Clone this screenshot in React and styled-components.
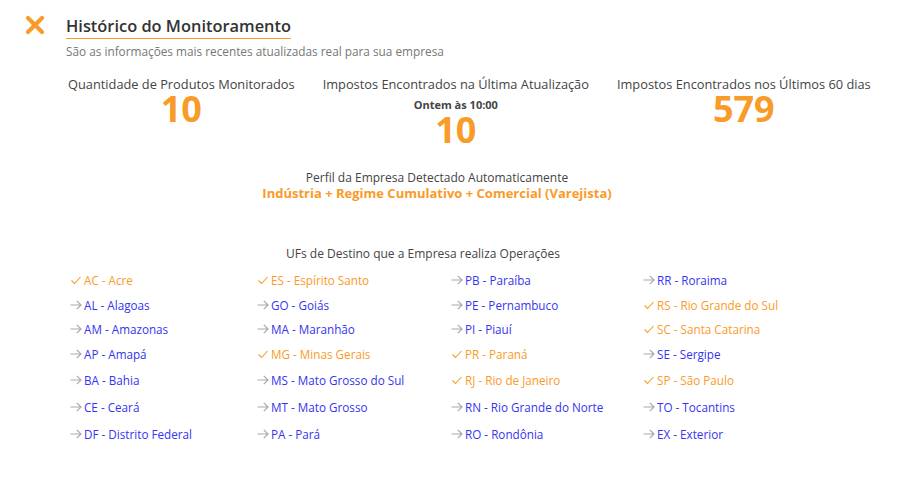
import React from "react";
import styled, { createGlobalStyle } from "styled-components";

const Global = createGlobalStyle`
  html, body { margin: 0; padding: 0; background: #fff; }
  body { font-family: "Open Sans", "Liberation Sans", sans-serif; color: #444; }
`;

const ORANGE = "#f99b28";
const BLUE = "#3535ee";

const Page = styled.div`
  width: 904px;
  height: 482px;
  box-sizing: border-box;
  padding: 15px 0 0 24px;
`;

const Header = styled.div`
  display: flex;
  align-items: flex-start;
  gap: 20px;
`;

const CloseButton = styled.button`
  border: none;
  background: none;
  padding: 0;
  margin-top: -1px;
  width: 22px;
  height: 22px;
  cursor: pointer;
  display: flex;
`;

const TitleBlock = styled.div`
  display: flex;
  flex-direction: column;
  align-items: flex-start;
`;

const Title = styled.h1`
  margin: 0;
  font-size: 16.4px;
  font-weight: 600;
  color: #333;
  line-height: 20px;
  padding-top: 1px;
  padding-bottom: 2px;
  border-bottom: 1px solid ${ORANGE};
`;

const Subtitle = styled.p`
  margin: 4px 0 0;
  font-size: 11.8px;
  color: #777;
  line-height: 16px;
`;

const Stats = styled.div`
  display: flex;
  gap: 28px;
  margin: 16px 0 0 44px;
`;

const Stat = styled.div`
  display: flex;
  flex-direction: column;
  align-items: center;
`;

const StatLabel = styled.div`
  font-size: 12.8px;
  color: #444;
  line-height: 18px;
`;

const StatSub = styled.div`
  font-size: 11px;
  font-weight: 700;
  color: #444;
  line-height: 14px;
  margin-top: 5px;
`;

const StatValue = styled.div`
  font-size: 36px;
  font-weight: 700;
  color: ${ORANGE};
  line-height: 30px;
  margin-top: ${(p) => (p.$afterSub ? "3px" : "1px")};
`;

const Profile = styled.div`
  display: flex;
  flex-direction: column;
  align-items: center;
  width: 826px;
  margin-top: 25px;
`;

const ProfileLabel = styled.div`
  font-size: 12px;
  color: #444;
  line-height: 16px;
`;

const ProfileValue = styled.div`
  font-size: 13px;
  font-weight: 700;
  color: ${ORANGE};
  line-height: 16px;
  margin-top: -1px;
`;

const UfTitle = styled.div`
  width: 798px;
  text-align: center;
  font-size: 12px;
  color: #444;
  line-height: 16px;
  margin-top: 45px;
`;

const UfGrid = styled.div`
  display: grid;
  grid-template-columns: 187px 194px 192px 193px;
  grid-auto-flow: column;
  grid-template-rows: 25px 24px 25px 26px 27px 27px 16px;
  align-items: start;
  margin: 10px 0 0 46px;
`;

const UfItem = styled.div`
  display: flex;
  align-items: center;
  gap: 2px;
  font-size: 11.7px;
  line-height: 16px;
  color: ${(p) => (p.$active ? ORANGE : BLUE)};
`;

const IconBox = styled.span`
  display: inline-flex;
  width: 12px;
  height: 12px;
`;

const XIcon = () => (
  <svg width="22" height="22" viewBox="0 0 22 22">
    <path d="M4 4 L18 18 M18 4 L4 18" stroke={ORANGE} strokeWidth="4.2" strokeLinecap="round" />
  </svg>
);

const Check = () => (
  <svg width="12" height="12" viewBox="0 0 12 12">
    <path d="M1.5 6.5 L4.5 9.5 L10.5 3" stroke={ORANGE} strokeWidth="1.1" fill="none" />
  </svg>
);

const Arrow = () => (
  <svg width="12" height="12" viewBox="0 0 12 12">
    <path d="M0.5 6 H11 M6.8 1.8 L11 6 L6.8 10.2" stroke="#aaa" strokeWidth="1.2" fill="none" />
  </svg>
);

const ufs = [
  ["AC - Acre", true], ["AL - Alagoas"], ["AM - Amazonas"], ["AP - Amapá"], ["BA - Bahia"], ["CE - Ceará"], ["DF - Distrito Federal"],
  ["ES - Espírito Santo", true], ["GO - Goiás"], ["MA - Maranhão"], ["MG - Minas Gerais", true], ["MS - Mato Grosso do Sul"], ["MT - Mato Grosso"], ["PA - Pará"],
  ["PB - Paraíba"], ["PE - Pernambuco"], ["PI - Piauí"], ["PR - Paraná", true], ["RJ - Rio de Janeiro", true], ["RN - Rio Grande do Norte"], ["RO - Rondônia"],
  ["RR - Roraima"], ["RS - Rio Grande do Sul", true], ["SC - Santa Catarina", true], ["SE - Sergipe"], ["SP - São Paulo", true], ["TO - Tocantins"], ["EX - Exterior"],
];

export default function App() {
  return (
    <Page>
      <Global />
      <Header>
        <CloseButton aria-label="Fechar"><XIcon /></CloseButton>
        <TitleBlock>
          <Title>Histórico do Monitoramento</Title>
          <Subtitle>São as informações mais recentes atualizadas real para sua empresa</Subtitle>
        </TitleBlock>
      </Header>
      <Stats>
        <Stat>
          <StatLabel>Quantidade de Produtos Monitorados</StatLabel>
          <StatValue>10</StatValue>
        </Stat>
        <Stat>
          <StatLabel>Impostos Encontrados na Última Atualização</StatLabel>
          <StatSub>Ontem às 10:00</StatSub>
          <StatValue $afterSub>10</StatValue>
        </Stat>
        <Stat>
          <StatLabel>Impostos Encontrados nos Últimos 60 dias</StatLabel>
          <StatValue>579</StatValue>
        </Stat>
      </Stats>
      <Profile>
        <ProfileLabel>Perfil da Empresa Detectado Automaticamente</ProfileLabel>
        <ProfileValue>Indústria + Regime Cumulativo + Comercial (Varejista)</ProfileValue>
      </Profile>
      <UfTitle>UFs de Destino que a Empresa realiza Operações</UfTitle>
      <UfGrid>
        {ufs.map(([name, active]) => (
          <UfItem key={name} $active={active}>
            <IconBox>{active ? <Check /> : <Arrow />}</IconBox>
            {name}
          </UfItem>
        ))}
      </UfGrid>
    </Page>
  );
}
